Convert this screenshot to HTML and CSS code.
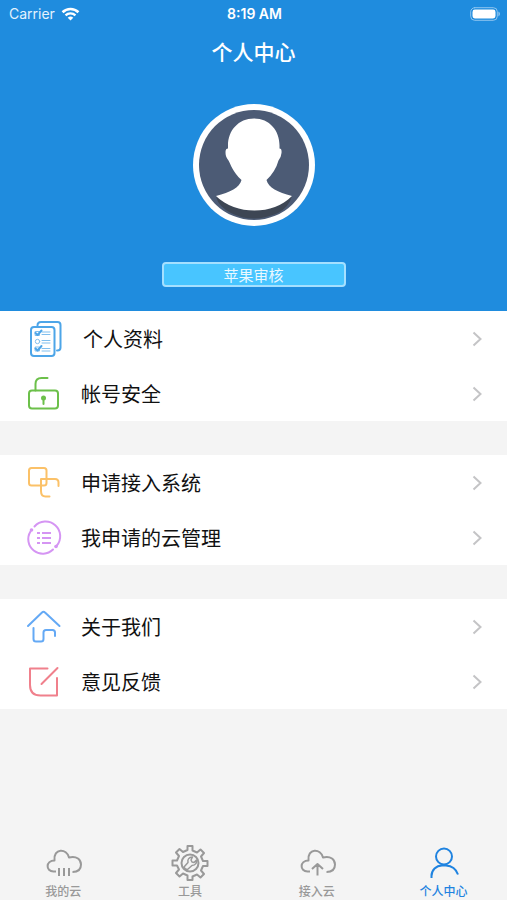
FILE: index.html
```html
<!DOCTYPE html>
<html lang="zh-CN">
<head>
<meta charset="utf-8">
<meta name="viewport" content="width=device-width, initial-scale=1">
<title>个人中心</title>
<link rel="stylesheet" href="styles.css">
</head>
<body>
<div class="app">
  <header class="hero">
    <div class="status">
      <div class="status-left">
        <span>Carrier</span>
        <svg class="wifi" viewBox="0 0 20 15" aria-hidden="true">
          <path d="M1.5 5.6a12.2 12.2 0 0 1 17 0" stroke-width="2.8"/>
          <path d="M4.7 9a7.6 7.6 0 0 1 10.6 0" stroke-width="2.5"/>
          <path class="solid" d="M10 14.4 7 11.5q3-2.4 6 0z"/>
        </svg>
      </div>
      <span class="status-time">8:19 AM</span>
      <svg class="battery" viewBox="0 0 30 14" aria-hidden="true">
        <rect class="shell" x="0.7" y="0.7" width="26.6" height="12.6" rx="4"/>
        <rect class="charge" x="2.5" y="2.5" width="23" height="9" rx="2.4"/>
        <path class="cap" d="M28.4 4.6q1.6 1 1.6 2.4t-1.6 2.4z"/>
      </svg>
    </div>
    <h1 class="title">个人中心</h1>
    <svg class="avatar" viewBox="0 0 122 122" role="img" aria-label="头像">
      <circle cx="61" cy="61" r="61" fill="#fff"/>
      <circle cx="61" cy="61" r="55" fill="#4c5b75"/>
      <path class="shade" d="M23 93q37 24 76-1-3 11-14 17-25 11-47 0-12-6-15-16z"/>
      <path fill="#fff" d="M61 14.500c15.500 0 25.500 12 25.500 27v3q2.500 0 2 4.500-.5 5-3 7.500-3 11-12 19.500c2 8 11 12 25.500 16-10 10-23 14.500-37.500 14.500s-28-4.500-38.500-14.500c14.500-4 23.500-8 25.500-16-9-8.500-10.500-15-13-19.500-2.500-3-3-5.500-3-8.500 0-2.500 1-3.500 2.500-3.500v-3c0-15 10.500-27 26-27z"/>
    </svg>
    <button class="name" type="button">苹果审核</button>
  </header>

  <main class="groups">
    <nav class="group">
      <a class="row" href="#profile">
        <svg class="icon blue" viewBox="0 0 36 36" aria-hidden="true">
          <path d="M11.500 4.500q0-3.500 3.500-3.500h16.500q3 0 3 3v22.500q0 3-3 3H31"/>
          <rect x="5" y="6" width="23.500" height="29" rx="3"/>
          <g class="detail"><path d="M16 11h8M16 13.500h8M16 19.500h8M16 22h8M16 27.500h8M16 30h8"/><rect x="9.500" y="10.500" width="4" height="4"/><circle cx="11.500" cy="20.500" r="2.200"/><rect x="9.500" y="26" width="4" height="4"/></g>
          <path d="m9.500 12 2 2 4-4.500M9.500 27.500l2 2 4-4.500"/>
        </svg>
        <span class="label indented">个人资料</span>
        <svg class="chevron" viewBox="0 0 10 16" aria-hidden="true"><path d="m1.500 1.500 7 6.500-7 6.500"/></svg>
      </a>
      <a class="row" href="#security">
        <svg class="icon green" viewBox="0 0 36 36" aria-hidden="true">
          <rect x="3" y="14.500" width="29" height="18" rx="3"/>
          <path d="M9.500 14.500V8q0-6 6-6h6M17.500 22v6"/>
          <circle class="dot" cx="17.500" cy="22" r="2.500"/>
        </svg>
        <span class="label">帐号安全</span>
        <svg class="chevron" viewBox="0 0 10 16" aria-hidden="true"><path d="m1.500 1.500 7 6.500-7 6.500"/></svg>
      </a>
    </nav>

    <nav class="group">
      <a class="row" href="#apply">
        <svg class="icon orange" viewBox="0 0 36 36" aria-hidden="true">
          <rect x="3" y="3" width="17.500" height="17.500" rx="2.500"/>
          <path d="M32.500 21v-3.500q0-3.500-3.500-3.500H15v12q0 5.500 4.500 5.500h4"/>
        </svg>
        <span class="label">申请接入系统</span>
        <svg class="chevron" viewBox="0 0 10 16" aria-hidden="true"><path d="m1.500 1.500 7 6.500-7 6.500"/></svg>
      </a>
      <a class="row" href="#manage">
        <svg class="icon purple" viewBox="0 0 36 36" aria-hidden="true">
          <path d="M8.500 6.500A14.500 14.500 0 0 1 30.500 26M27 29.500A14.500 14.500 0 0 1 4.500 11.500"/>
          <circle class="dot" cx="5.500" cy="10" r="1.800"/>
          <circle class="dot" cx="30" cy="26.500" r="1.800"/>
          <path class="list" d="M11 13h3M16 13h9M11 18h3M16 18h9M11 23h3M16 23h9"/>
        </svg>
        <span class="label">我申请的云管理</span>
        <svg class="chevron" viewBox="0 0 10 16" aria-hidden="true"><path d="m1.500 1.500 7 6.500-7 6.500"/></svg>
      </a>
    </nav>

    <nav class="group">
      <a class="row" href="#about">
        <svg class="icon sky" viewBox="0 0 36 36" aria-hidden="true">
          <path d="M2 17 16 3.500q1.500-1.500 3 0L33.500 17M7.500 19v11q0 2.500 2.500 2.500h5q2.500 0 2.500-2.500v-6.500q0-2.500 2.500-2.500h6.500q2.500 0 2.500 2.500V27"/>
        </svg>
        <span class="label">关于我们</span>
        <svg class="chevron" viewBox="0 0 10 16" aria-hidden="true"><path d="m1.500 1.500 7 6.500-7 6.500"/></svg>
      </a>
      <a class="row" href="#feedback">
        <svg class="icon red" viewBox="0 0 36 36" aria-hidden="true">
          <path d="M21.500 4.500H4V21q0 10.500 10.500 10.500h16.500V14M31.500 4 15.500 20"/>
        </svg>
        <span class="label">意见反馈</span>
        <svg class="chevron" viewBox="0 0 10 16" aria-hidden="true"><path d="m1.500 1.500 7 6.500-7 6.500"/></svg>
      </a>
    </nav>
  </main>

  <nav class="tabs">
    <a class="tab" href="#cloud">
      <svg viewBox="0 0 38 38" aria-hidden="true">
        <path d="M12 27.500H9.500C1.500 27.500 1.500 16.500 10.500 16.500 9 4 23 4 25 13.500 33 11.500 37 16 37 20.500S34 28 28.500 28M15 24v8M20 24v8M25 24v8"/>
      </svg>
      <span>我的云</span>
    </a>
    <a class="tab" href="#tools">
      <svg viewBox="0 0 38 38" aria-hidden="true">
        <path d="M16.500 2h5v4.500l4.500 2 3.500-3 3.500 3.500-3 3.500 2 4.500H36.500v5H32l-2 4.500 3 3.500-3.500 3.500-3.500-3-4.500 2V36h-5v-4.500l-4.500-2-3.500 3L5 29l3-3.500L6 21.500H1.500v-5H6L8 12 5 8.500 8.500 5l3.500 3 4.500-2z"/>
        <circle cx="19" cy="19" r="8.500"/>
        <path class="wrench" d="m13 23 4-4.500q-1-5 4.500-5.500l-1.500 3 1 2 2 .5 2.500-2.500q.5 5-4.500 5.500l-4.500 4q-2.500 0-3.500-2.500z"/>
      </svg>
      <span>工具</span>
    </a>
    <a class="tab" href="#connect">
      <svg viewBox="0 0 38 38" aria-hidden="true">
        <path d="M12 27.500H9.500C1.500 27.500 1.500 16.500 10.500 16.500 9 4 23 4 25 13.500 33 11.500 37 16 37 20.500S34 28 28.500 28M19.500 31.500V20M14 25l5.500-5 5.500 5"/>
      </svg>
      <span>接入云</span>
    </a>
    <a class="tab active" href="#me" aria-current="page">
      <svg viewBox="0 0 38 38" aria-hidden="true">
        <circle cx="19" cy="12.500" r="8"/>
        <path d="M6.500 34v-2A10.500 10.500 0 0 1 17 21.500h4q9 .5 12 9"/>
      </svg>
      <span>个人中心</span>
    </a>
  </nav>
</div>
</body>
</html>
```
FILE: styles.css
```css
* { box-sizing: border-box; }

body {
  margin: 0;
  background: #f4f4f4;
  color: #111;
  font-family: Inter, "Noto Sans CJK SC", sans-serif;
}

a { color: inherit; text-decoration: none; }

svg {
  display: block;
  flex: none;
  fill: none;
  stroke: currentColor;
  stroke-linecap: round;
  stroke-linejoin: round;
}

.app {
  display: flex;
  flex-direction: column;
  min-height: 100vh;
}

.hero {
  display: flex;
  flex-direction: column;
  align-items: center;
  padding-bottom: 24px;
  background: #1f8cde;
  color: #fff;
}

.status {
  display: grid;
  grid-template-columns: 1fr auto 1fr;
  align-items: center;
  align-self: stretch;
  height: 27px;
  padding: 0 7px 0 9px;
  font-size: 14px;
}

.status-left { display: flex; align-items: center; gap: 6px; color: #e3f2fd; }
.status-time { font-weight: 600; }

.wifi { width: 19px; height: 14px; color: #fff; stroke-linecap: butt; }
.wifi .solid { fill: #fff; stroke: none; }

.battery { width: 30px; height: 14px; justify-self: end; }
.battery .shell { stroke: #8fc5ef; stroke-width: 1; }
.battery .charge { fill: #fff; stroke: none; }
.battery .cap { fill: #8fc5ef; stroke: none; }

.title {
  margin: 10px 0 35px;
  font-size: 21px;
  font-weight: 500;
  line-height: 32px;
}

.avatar { width: 122px; height: 122px; stroke: none; }
.avatar .shade { fill: #3d4654; }

.name {
  width: 184px;
  height: 25px;
  margin-top: 36px;
  padding: 2px 0 0;
  border: 2px solid #a5e0ff;
  border-radius: 4px;
  background: #48c5ff;
  color: #eaf8ff;
  font-family: inherit;
  font-size: 15px;
  line-height: 19px;
}

.groups { display: grid; gap: 34px; }
.group { background: #fff; }

.row {
  display: flex;
  align-items: center;
  height: 55px;
  padding: 0 25px 0 26px;
}

.icon { width: 36px; height: 36px; stroke-width: 2; }
.icon .dot { fill: currentColor; stroke: none; }
.icon .detail { stroke-width: 1; opacity: 0.7; }
.icon .list { stroke-linecap: butt; }
.blue { color: #4da5e8; }
.green { color: #6cc04a; }
.orange { color: #fbc168; }
.purple { color: #d595f3; }
.sky { color: #64a9f5; }
.red { color: #f0808c; }

.label {
  flex: 1;
  padding: 2px 0 0 19px;
  font-size: 20px;
  line-height: 28px;
}
.label.indented { padding-left: 21px; }

.chevron { width: 10px; height: 16px; color: #c4c4c6; stroke-width: 2; stroke-linecap: butt; stroke-linejoin: miter; }

.tabs {
  display: grid;
  grid-template-columns: repeat(4, 1fr);
  margin-top: auto;
  color: #999;
}

.tab {
  display: flex;
  flex-direction: column;
  align-items: center;
  gap: 2px;
  font-size: 12px;
  font-weight: 500;
  line-height: 16px;
}

.tab svg { width: 38px; height: 38px; stroke-width: 2; stroke-linecap: butt; }
.tab .wrench { stroke-width: 1.5; }
.tab.active { color: #1f83e0; }
```
